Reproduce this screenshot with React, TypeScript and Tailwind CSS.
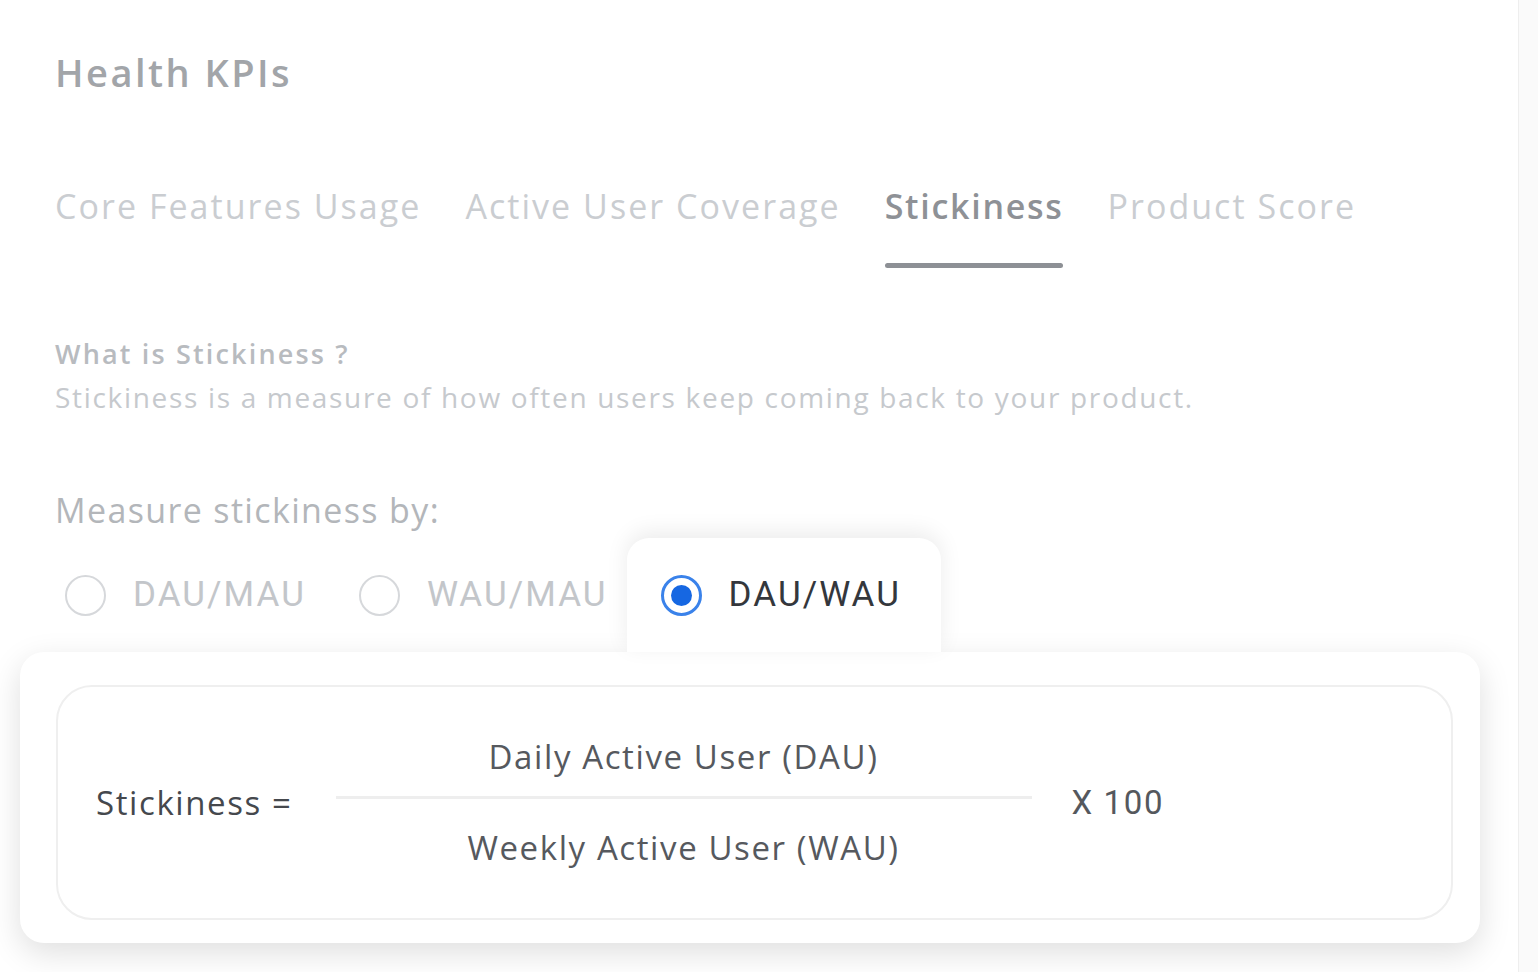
import React from "react";

const tabs = [
  "Core Features Usage",
  "Active User Coverage",
  "Stickiness",
  "Product Score",
];

function Radio({ checked }: { checked?: boolean }) {
  if (checked) {
    return (
      <span className="flex h-[41px] w-[41px] items-center justify-center rounded-full border-[3px] border-[#3a82ea] bg-white">
        <span className="h-[21px] w-[21px] rounded-full bg-[#1667e2]" />
      </span>
    );
  }
  return (
    <span className="h-[41px] w-[41px] rounded-full border-2 border-[#d6d8db] bg-white" />
  );
}

export default function App() {
  const options = ["DAU/MAU", "WAU/MAU"];

  return (
    <div
      className="flex h-[972px] w-full overflow-hidden bg-white tracking-[0.055em]"
      style={{ fontFamily: '"Open Sans", "Noto Sans", sans-serif' }}
    >
      <main className="flex w-[1518px] flex-col pl-[20px]">
        {/* Header */}
        <h1 className="mt-[48px] pl-[35px] text-[38px] font-semibold leading-[48px] tracking-[0.065em] text-[#a2a5a9]">
          Health KPIs
        </h1>

        {/* Tabs */}
        <div className="mt-[86px] flex gap-[44px] pl-[35px]">
          {tabs.map((tab) => {
            const active = tab === "Stickiness";
            return (
              <div key={tab} className="flex flex-col">
                <span
                  className={
                    active
                      ? "text-[34px] font-semibold leading-[48px] tracking-[0.05em] text-[#8e9196]"
                      : "text-[34px] leading-[48px] tracking-[0.06em] text-[#cacdd1]"
                  }
                >
                  {tab}
                </span>
                <span
                  className={
                    active
                      ? "mt-[33px] h-[5px] rounded-full bg-[#8d9095]"
                      : "mt-[33px] h-[5px]"
                  }
                />
              </div>
            );
          })}
        </div>

        {/* Description */}
        <div className="mt-[68px] pl-[35px]">
          <p className="text-[27px] font-semibold leading-[36px] tracking-[0.08em] text-[#b8bbbf]">
            What is Stickiness ?
          </p>
          <p className="mt-[5px] text-[28px] leading-[40px] tracking-[0.06em] text-[#c6c9cd]">
            Stickiness is a measure of how often users keep coming back to your
            product.
          </p>
        </div>

        <p className="mt-[69px] pl-[35px] text-[34px] leading-[48px] tracking-[0.04em] text-[#b3b6ba]">
          Measure stickiness by:
        </p>

        {/* Options */}
        <div
          className="mt-[4px] flex items-center pl-[45px] tracking-[0.13em]"
          style={{ fontFamily: "Roboto, Arial, sans-serif" }}
        >
          {options.map((opt) => (
            <div key={opt} className="mr-[53px] flex items-center gap-[27px]">
              <Radio />
              <span className="text-[35px] text-[#c3c6ca]">{opt}</span>
            </div>
          ))}
          <div className="relative z-10 -ml-[34px] flex h-[114px] items-center gap-[27px] rounded-t-[22px] bg-white pl-[34px] pr-[40px] shadow-[0_-6px_22px_rgba(0,0,0,0.08)]">
            <Radio checked />
            <span className="text-[35px] text-[#34373c]">DAU/WAU</span>
          </div>
        </div>

        {/* Formula card */}
        <div className="w-[1460px] rounded-[24px] bg-white pb-[23px] pl-[36px] pr-[27px] pt-[33px] tracking-[0.1em] shadow-[0_10px_32px_rgba(0,0,0,0.13)]">
          <div className="flex h-[235px] items-center rounded-[36px] border-2 border-[#efefef] pl-[38px]">
            <span className="text-[33px] text-[#45484d]">Stickiness =</span>
            <div className="ml-[43px] flex w-[696px] flex-col items-center">
              <span className="text-[33px] leading-[48px] text-[#56595e]">
                Daily Active User (DAU)
              </span>
              <span className="mt-[15px] h-[3px] w-full bg-[#eeeeee]" />
              <span className="mt-[25px] text-[33px] leading-[48px] text-[#56595e]">
                Weekly Active User (WAU)
              </span>
            </div>
            <span
              className="ml-[40px] text-[33px] text-[#55585d]"
              style={{ fontFamily: "Roboto, Arial, sans-serif" }}
            >
              X 100
            </span>
          </div>
        </div>
      </main>

      {/* Right edge */}
      <div className="flex-1 border-l border-[#eeeeee] bg-[#fafafa]" />
    </div>
  );
}
